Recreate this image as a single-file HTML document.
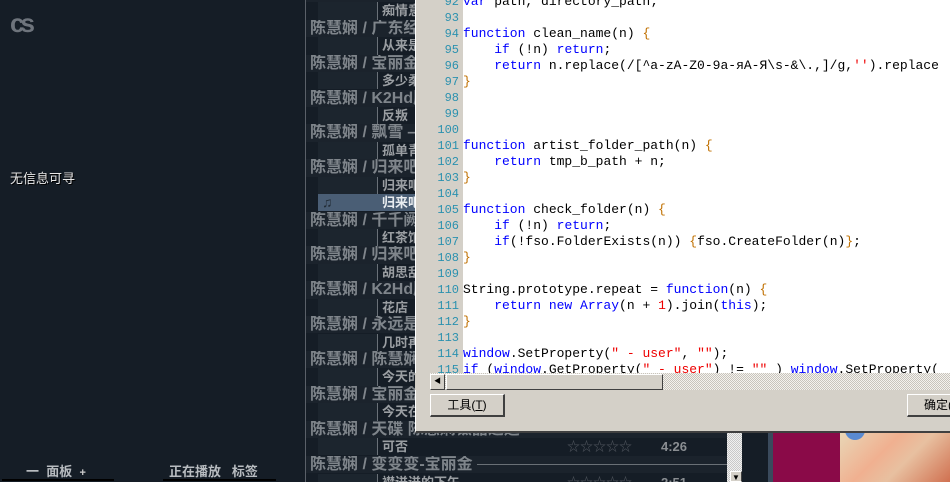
<!DOCTYPE html>
<html><head><meta charset="utf-8"><style>
*{margin:0;padding:0;box-sizing:border-box}
html,body{width:950px;height:482px;overflow:hidden}
body{background:#151d26;position:relative;font-family:"Liberation Sans","Noto Sans CJK SC",sans-serif}
.a{position:absolute}
.row{position:absolute;left:306px;width:421px;height:17.43px;white-space:nowrap;overflow:hidden}
.g{background:#1b232c;color:#7f858b;font-weight:bold;font-size:16px;line-height:17px;padding-left:4px}
.t{color:#9a9ea2;font-weight:bold;font-size:13px;line-height:17px}
.t .l{position:absolute;left:12px;width:60px;top:0;bottom:0;background:#1c252e;border-right:1px solid #6a7178}
.t .x{position:absolute;left:76px}
.sel .l{background:#4a5e75;width:109px;border-right:none}
.sel .x{color:#e8ecf0}
.code{position:absolute;left:463px;top:0;width:487px;height:373px;background:#fff;overflow:hidden;font-family:"Liberation Mono",monospace;font-size:13px}
.ln{position:absolute;left:415px;width:44px;text-align:right;color:#2b91af;font-family:"Liberation Mono",monospace;font-size:12px;height:16px;line-height:16px}
.cl{position:absolute;left:0;height:16px;line-height:16px;white-space:pre;color:#000}
.k{color:#0000ff}.s{color:#e00}.b{color:#c07000}
</style></head><body>
<!-- left panel -->
<div class="a" style="left:10px;top:8px;color:#6e747c;font-weight:bold;font-size:26px;letter-spacing:-4px;font-family:'Liberation Sans',sans-serif">cs</div>
<div class="a" style="left:10px;top:168px;color:#e8e8e8;font-size:13px;text-shadow:1px 1px 0 #000">无信息可寻</div>
<div class="a" style="left:26px;top:461px;color:#b8bcc0;font-size:13px;font-weight:bold">一&nbsp; 面板 &nbsp;<span style="color:#ccc;font-size:11px">+</span></div>
<div class="a" style="left:169px;top:461px;color:#b8bcc0;font-size:13px;font-weight:bold">正在播放 &nbsp; 标签</div>
<div class="a" style="left:2px;top:479px;width:112px;height:3px;border-top:2px solid #000"></div>
<div class="a" style="left:163px;top:479px;width:113px;height:3px;border-top:2px solid #000"></div>
<div class="a" style="left:305px;top:0;width:1px;height:482px;background:#5a6068"></div>

<!-- playlist -->
<div class="row g" style="top:-15.1px">陈慧娴 / 一</div>
<div class="row t" style="top:2.3px"><span class="l"></span><span class="x">痴情意</span></div>
<div class="row g" style="top:19.7px">陈慧娴 / 广东经典</div>
<div class="row t" style="top:37.2px"><span class="l"></span><span class="x">从来是</span></div>
<div class="row g" style="top:54.6px">陈慧娴 / 宝丽金</div>
<div class="row t" style="top:72px"><span class="l"></span><span class="x">多少柔</span></div>
<div class="row g" style="top:89.5px">陈慧娴 / K2Hd版</div>
<div class="row t" style="top:106.9px"><span class="l"></span><span class="x">反叛</span></div>
<div class="row g" style="top:124.3px">陈慧娴 / 飘雪 —</div>
<div class="row t" style="top:141.8px"><span class="l"></span><span class="x">孤单青</span></div>
<div class="row g" style="top:159.2px">陈慧娴 / 归来吧</div>
<div class="row t" style="top:176.6px"><span class="l"></span><span class="x">归来吧</span></div>
<div class="row t sel" style="top:194px"><span class="l"></span><span class="a" style="left:16px;color:#222c36;font-size:14px">♫</span><span class="x">归来吧</span></div>
<div class="row g" style="top:211.5px">陈慧娴 / 千千阙歌</div>
<div class="row t" style="top:228.9px"><span class="l"></span><span class="x">红茶馆</span></div>
<div class="row g" style="top:246.3px">陈慧娴 / 归来吧</div>
<div class="row t" style="top:263.8px"><span class="l"></span><span class="x">胡思乱</span></div>
<div class="row g" style="top:281.2px">陈慧娴 / K2Hd版</div>
<div class="row t" style="top:298.6px"><span class="l"></span><span class="x">花店</span></div>
<div class="row g" style="top:316px">陈慧娴 / 永远是</div>
<div class="row t" style="top:333.5px"><span class="l"></span><span class="x">几时再</span></div>
<div class="row g" style="top:350.9px">陈慧娴 / 陈慧娴</div>
<div class="row t" style="top:368.3px"><span class="l"></span><span class="x">今天的</span></div>
<div class="row g" style="top:385.8px">陈慧娴 / 宝丽金</div>
<div class="row t" style="top:403.2px"><span class="l"></span><span class="x">今天在</span></div>
<div class="row g" style="top:420.6px">陈慧娴 / 天碟 陈慧娴钛晶之选</div>
<div class="row t" style="top:438px"><span class="l"></span><span class="x">可否</span><span class="a" style="left:261px;color:#4a5058">☆☆☆☆☆</span><span class="a" style="left:355px;color:#8a8e92">4:26</span></div>
<div class="row g" style="top:455.5px">陈慧娴 / 变变变-宝丽金 <span style="display:inline-block;width:250px;height:1px;background:#6a7076;vertical-align:middle"></span></div>
<div class="row t" style="top:474px"><span class="l"></span><span class="x">襟迸迸的下午</span><span class="a" style="left:261px;color:#4a5058">☆☆☆☆☆</span><span class="a" style="left:355px;color:#8a8e92">2:51</span></div>

<!-- playlist scrollbar -->
<div class="a" style="left:727px;top:430px;width:15px;height:52px;background:repeating-conic-gradient(#c8c8c8 0 25%,#f0f0f0 0 50%) 0 0/2px 2px"></div>
<div class="a" style="left:730px;top:471px;width:12px;height:11px;background:#d4d0c8;border:1px solid #fff;border-right-color:#404040;color:#000;font-size:8px;text-align:center;line-height:12px">▼</div>
<!-- album art -->
<div class="a" style="left:768px;top:430px;width:5px;height:52px;background:#3a4a5c"></div>
<div class="a" style="left:773px;top:430px;width:67px;height:52px;background:#8a0a48"></div>
<div class="a" style="left:840px;top:430px;width:110px;height:52px;background:linear-gradient(135deg,#e8d8b8,#f0b090 40%,#e8c0a0 60%,#d07050)"></div>
<div class="a" style="left:845px;top:430px;width:20px;height:10px;border-radius:0 0 10px 10px;background:#5a8ad0"></div>

<!-- dialog -->
<div class="a" style="left:415px;top:0;width:535px;height:433px;background:#d4d0c8;border-bottom:2px solid #404040;border-left:1px solid #fff"></div>
<div class="code">
<div class="cl" style="top:-6px"><span class="k">var</span> path, directory_path;</div>
<div class="cl" style="top:26px"><span class="k">function</span> clean_name(n) <span class="b">{</span></div>
<div class="cl" style="top:42px">    <span class="k">if</span> (!n) <span class="k">return</span>;</div>
<div class="cl" style="top:58px">    <span class="k">return</span> n.replace(/[^a-zA-Z0-9а-яА-Я\s-&amp;\.,]/g,<span class="s">''</span>).replace</div>
<div class="cl" style="top:74px"><span class="b">}</span></div>
<div class="cl" style="top:138px"><span class="k">function</span> artist_folder_path(n) <span class="b">{</span></div>
<div class="cl" style="top:154px">    <span class="k">return</span> tmp_b_path + n;</div>
<div class="cl" style="top:170px"><span class="b">}</span></div>
<div class="cl" style="top:202px"><span class="k">function</span> check_folder(n) <span class="b">{</span></div>
<div class="cl" style="top:218px">    <span class="k">if</span> (!n) <span class="k">return</span>;</div>
<div class="cl" style="top:234px">    <span class="k">if</span>(!fso.FolderExists(n)) <span class="b">{</span>fso.CreateFolder(n)<span class="b">}</span>;</div>
<div class="cl" style="top:250px"><span class="b">}</span></div>
<div class="cl" style="top:282px">String.prototype.repeat = <span class="k">function</span>(n) <span class="b">{</span></div>
<div class="cl" style="top:298px">    <span class="k">return new Array</span>(n + <span class="s">1</span>).join(<span class="k">this</span>);</div>
<div class="cl" style="top:314px"><span class="b">}</span></div>
<div class="cl" style="top:346px"><span class="k">window</span>.SetProperty(<span class="s">" - user"</span>, <span class="s">""</span>);</div>
<div class="cl" style="top:362px"><span class="k">if</span> (<span class="k">window</span>.GetProperty(<span class="s">" - user"</span>) != <span class="s">""</span> ) <span class="k">window</span>.SetProperty(</div>
</div>
<div class="a" style="left:415px;top:373px;width:535px;height:17px;background:#d4d0c8"></div>
<div class="a" style="left:430px;top:373px;width:520px;height:17px;background:repeating-conic-gradient(#c8c4bc 0 25%,#f4f2ee 0 50%) 0 0/2px 2px"></div>
<div class="a" style="left:430px;top:374px;width:15px;height:16px;background:#d4d0c8;border:1px solid #fff;border-right-color:#404040;border-bottom-color:#404040;font-size:7px;line-height:14px;text-align:center">◀</div>
<div class="a" style="left:446px;top:374px;width:217px;height:16px;background:#d4d0c8;border:1px solid #fff;border-right-color:#404040;border-bottom-color:#404040"></div>
<div class="a" style="left:430px;top:394px;width:75px;height:23px;background:#d4d0c8;border:1px solid #fff;border-right:2px solid #404040;border-bottom:2px solid #404040;font-size:12px;line-height:20px;text-align:center;color:#000">工具(<u>T</u>)</div>
<div class="a" style="left:907px;top:394px;width:60px;height:23px;background:#d4d0c8;border:1px solid #fff;border-bottom:2px solid #404040;font-size:12px;line-height:20px;padding-left:16px;color:#000">确定(</div>
<div id="ln"></div>
<script>
var h='';for(var i=92;i<=115;i++){h+='<div class="ln" style="top:'+(-6+(i-92)*16)+'px">'+i+'</div>';}
document.getElementById('ln').innerHTML=h;
</script>
</body></html>
